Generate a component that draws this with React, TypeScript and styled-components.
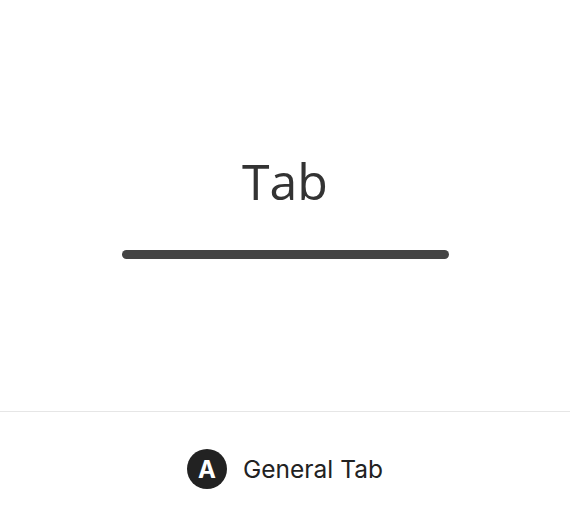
import React from "react";
import styled, { createGlobalStyle } from "styled-components";

const Global = createGlobalStyle`
  html, body { margin: 0; padding: 0; background: #ffffff; }
  #root { width: 570px; height: 526px; }
`;

const Page = styled.div`
  width: 570px;
  height: 526px;
  display: flex;
  flex-direction: column;
  background: #ffffff;
`;

const Panel = styled.section`
  height: 411px;
  display: flex;
  flex-direction: column;
  align-items: center;
  justify-content: center;
  border-bottom: 1px solid #e6e6e6;
`;

const Title = styled.h1`
  margin: 0;
  font-family: "Open Sans", "Noto Sans", sans-serif;
  font-weight: 400;
  font-size: 50px;
  line-height: 68px;
  color: #333333;
`;

const Indicator = styled.div`
  margin-top: 35px;
  margin-bottom: 6px;
  width: 327px;
  height: 9px;
  border-radius: 5px;
  background: #444444;
`;

const Footer = styled.footer`
  flex: 1;
  display: flex;
  align-items: center;
  justify-content: center;
  gap: 16px;
`;

const Badge = styled.div`
  width: 40px;
  height: 40px;
  border-radius: 50%;
  background: #222222;
  color: #ffffff;
  display: flex;
  align-items: center;
  justify-content: center;
  font-family: Inter, "Liberation Sans", sans-serif;
  font-weight: 700;
  font-size: 24px;
`;

const Label = styled.span`
  font-family: Inter, "Liberation Sans", sans-serif;
  font-size: 24.5px;
  color: #222222;
`;

export default function App() {
  return (
    <Page>
      <Global />
      <Panel>
        <Title>Tab</Title>
        <Indicator />
      </Panel>
      <Footer>
        <Badge>A</Badge>
        <Label>General Tab</Label>
      </Footer>
    </Page>
  );
}
